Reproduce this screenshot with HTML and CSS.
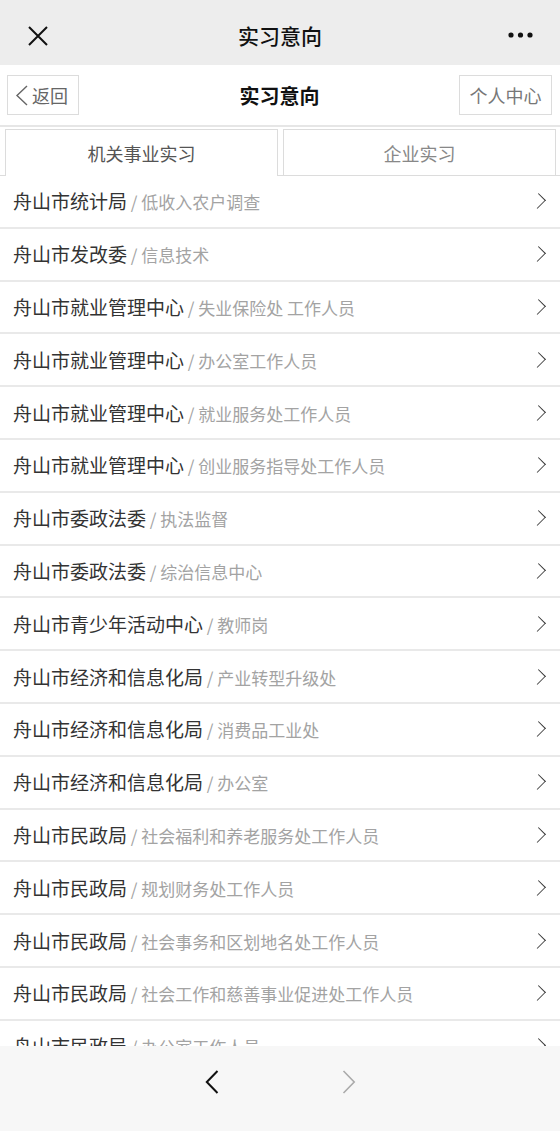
FILE: index.html
```html
<!DOCTYPE html>
<html lang="zh-CN">
<head>
<meta charset="utf-8">
<title>实习意向</title>
<link rel="stylesheet" href="styles.css">
</head>
<body>
<div class="app">
  <div class="topbar">
    <div class="tb-left">
      <svg class="icon-close" width="20" height="20" viewBox="0 0 20 20"><path d="M1 1 L19 19 M19 1 L1 19" stroke="#111" stroke-width="2" fill="none"/></svg>
    </div>
    <div class="tb-title">实习意向</div>
    <div class="tb-right">
      <svg width="26" height="6" viewBox="0 0 26 6"><circle cx="3" cy="3" r="2.6" fill="#111"/><circle cx="12.5" cy="3" r="2.6" fill="#111"/><circle cx="22" cy="3" r="2.6" fill="#111"/></svg>
    </div>
  </div>

  <div class="header">
    <div class="hbtn back">
      <svg width="13" height="21" viewBox="0 0 13 21"><path d="M12 1 L2 10.5 L12 20" stroke="#666" stroke-width="1.4" fill="none"/></svg>
      <span>返回</span>
    </div>
    <div class="htitle">实习意向</div>
    <div class="hbtn user">个人中心</div>
  </div>

  <div class="sep"></div>

  <div class="tabs">
    <div class="tab active">机关事业实习</div>
    <div class="tab">企业实习</div>
  </div>

  <div class="list">
    <div class="row"><div class="label"><span class="main">舟山市统计局</span><span class="sub"> / 低收入农户调查</span></div></div>
    <div class="row"><div class="label"><span class="main">舟山市发改委</span><span class="sub"> / 信息技术</span></div></div>
    <div class="row"><div class="label"><span class="main">舟山市就业管理中心</span><span class="sub"> / 失业保险处 工作人员</span></div></div>
    <div class="row"><div class="label"><span class="main">舟山市就业管理中心</span><span class="sub"> / 办公室工作人员</span></div></div>
    <div class="row"><div class="label"><span class="main">舟山市就业管理中心</span><span class="sub"> / 就业服务处工作人员</span></div></div>
    <div class="row"><div class="label"><span class="main">舟山市就业管理中心</span><span class="sub"> / 创业服务指导处工作人员</span></div></div>
    <div class="row"><div class="label"><span class="main">舟山市委政法委</span><span class="sub"> / 执法监督</span></div></div>
    <div class="row"><div class="label"><span class="main">舟山市委政法委</span><span class="sub"> / 综治信息中心</span></div></div>
    <div class="row"><div class="label"><span class="main">舟山市青少年活动中心</span><span class="sub"> / 教师岗</span></div></div>
    <div class="row"><div class="label"><span class="main">舟山市经济和信息化局</span><span class="sub"> / 产业转型升级处</span></div></div>
    <div class="row"><div class="label"><span class="main">舟山市经济和信息化局</span><span class="sub"> / 消费品工业处</span></div></div>
    <div class="row"><div class="label"><span class="main">舟山市经济和信息化局</span><span class="sub"> / 办公室</span></div></div>
    <div class="row"><div class="label"><span class="main">舟山市民政局</span><span class="sub"> / 社会福利和养老服务处工作人员</span></div></div>
    <div class="row"><div class="label"><span class="main">舟山市民政局</span><span class="sub"> / 规划财务处工作人员</span></div></div>
    <div class="row"><div class="label"><span class="main">舟山市民政局</span><span class="sub"> / 社会事务和区划地名处工作人员</span></div></div>
    <div class="row"><div class="label"><span class="main">舟山市民政局</span><span class="sub"> / 社会工作和慈善事业促进处工作人员</span></div></div>
    <div class="row"><div class="label"><span class="main">舟山市民政局</span><span class="sub"> / 办公室工作人员</span></div></div>
  </div>

  <div class="bottombar">
    <svg width="14" height="24" viewBox="0 0 14 24"><path d="M12.5 1 L1.8 12 L12.5 23" stroke="#111" stroke-width="2" fill="none"/></svg>
    <svg width="14" height="24" viewBox="0 0 14 24"><path d="M1.5 1 L12.2 12 L1.5 23" stroke="#aaa" stroke-width="1.6" fill="none"/></svg>
  </div>
</div>
</body>
</html>
```

FILE: styles.css
```css
* { box-sizing: border-box; }
html, body { margin: 0; padding: 0; }
body {
  font-family: "Noto Sans CJK SC", "Noto Sans", "Liberation Sans", sans-serif;
  background: #fff;
  color: #333;
}
.app {
  width: 560px;
  height: 1131px;
  display: flex;
  flex-direction: column;
  overflow: hidden;
}
.topbar {
  height: 65px;
  flex: none;
  background: #ededed;
  display: grid;
  grid-template-columns: 120px 1fr 120px;
  align-items: center;
}
.tb-left { padding-left: 28px; display: flex; align-items: center; padding-top: 6px; }
.tb-title { text-align: center; font-size: 21px; font-weight: 500; color: #111; padding-top: 4px; }
.tb-right { display: flex; justify-content: flex-end; padding-right: 26px; padding-top: 5px; }
.header {
  height: 60px;
  flex: none;
  display: grid;
  grid-template-columns: 1fr auto 1fr;
  align-items: center;
  padding: 0 8px 0 7px;
  background: #fff;
}
.hbtn {
  height: 40px;
  border: 1px solid #dcdcdc;
  display: flex;
  align-items: center;
  font-size: 18px;
  color: #666;
}
.back { width: 72px; padding-left: 7px; gap: 4px; justify-self: start; }
.user { width: 93px; justify-content: center; color: #777; justify-self: end; }
.htitle { font-size: 20px; font-weight: 700; color: #111; }
.sep { height: 2px; background: #e6e6e6; flex: none; }
.tabs {
  flex: none;
  display: flex;
  gap: 5px;
  padding: 2px 4px 0 5px;
  border-bottom: 1px solid #dcdcdc;
}
.tab {
  flex: 1;
  height: 46px;
  border: 1px solid #dcdcdc;
  border-bottom: none;
  display: flex;
  align-items: center;
  justify-content: center;
  font-size: 18px;
  color: #888;
}
.tab.active {
  color: #555;
  height: 47px;
  margin-bottom: -1px;
  background: #fff;
}
.list { flex: 1; overflow: hidden; }
.row {
  height: 52.8px;
  border-bottom: 2px solid #e9e9e9;
  display: flex;
  align-items: center;
  padding: 0 36px 1px 13px;
  position: relative;
  white-space: nowrap;
}
.row::after {
  content: "";
  position: absolute;
  right: 16px;
  top: 50%;
  width: 11px;
  height: 11px;
  border-right: 1.5px solid #333;
  border-top: 1.5px solid #333;
  transform: translateY(-50%) rotate(45deg) scaleX(0.85);
}
.main { font-size: 19px; color: #333; }
.sub { font-size: 17px; color: #a3a3a3; }
.bottombar {
  height: 85px;
  flex: none;
  background: #f7f7f7;
  display: flex;
  justify-content: center;
  align-items: center;
  gap: 123px;
  padding-bottom: 14px;
}
```
